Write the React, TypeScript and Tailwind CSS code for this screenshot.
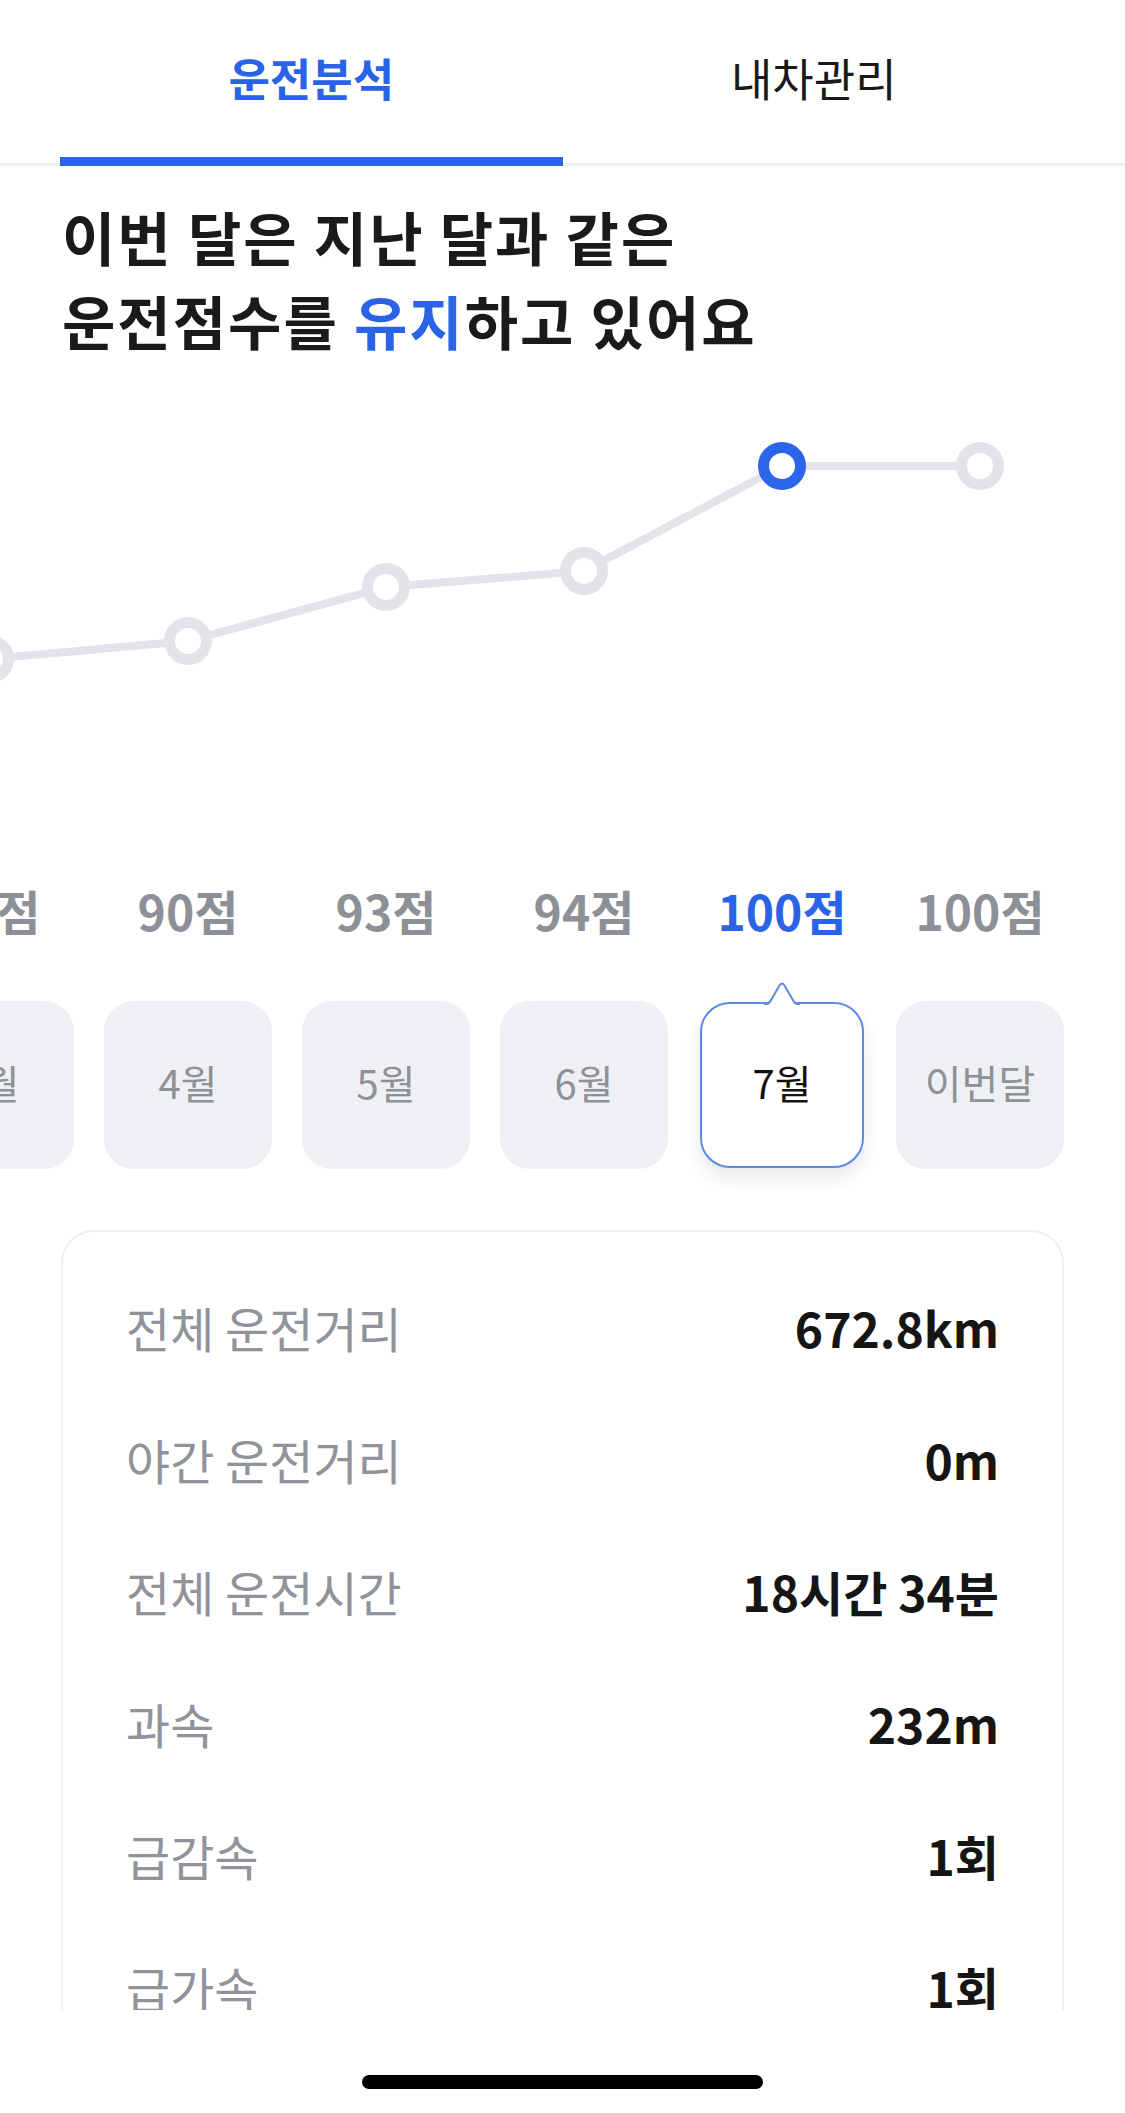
import React from "react";

const FONT = { fontFamily: '"Noto Sans CJK KR", "Noto Sans", sans-serif' };

const cols = [
  { score: "89점", month: "3월", y: 660 },
  { score: "90점", month: "4월", y: 642 },
  { score: "93점", month: "5월", y: 588 },
  { score: "94점", month: "6월", y: 572 },
  { score: "100점", month: "7월", y: 467, selected: true },
  { score: "100점", month: "이번달", y: 467 },
];

const CHART_TOP = 363;
const centers = [-10, 188, 386, 584, 782, 980];

function Chart() {
  const pts = cols.map((c, i) => [centers[i], c.y - CHART_TOP]);
  const d = pts.map((p, i) => `${i === 0 ? "M" : "L"}${p[0]} ${p[1]}`).join(" ");
  return (
    <svg width="1125" height="524" viewBox="0 0 1125 524" className="block">
      <path d={d} fill="none" stroke="#e3e4e9" strokeWidth="8" strokeLinejoin="round" />
      {pts.map((p, i) => (
        <circle
          key={i}
          cx={p[0]}
          cy={p[1]}
          r="18.5"
          fill="#ffffff"
          stroke={cols[i].selected ? "#2c64ea" : "#e3e4e9"}
          strokeWidth="11"
        />
      ))}
    </svg>
  );
}

const rows = [
  ["전체 운전거리", "672.8km"],
  ["야간 운전거리", "0m"],
  ["전체 운전시간", "18시간 34분"],
  ["과속", "232m"],
  ["급감속", "1회"],
  ["급가속", "1회"],
  ["급출발", "0회"],
];

const TAIL = "M0 22 L2 22 Q5 22 6.5 19 L15.5 3.5 Q18 -0.5 20.5 3.5 L29.5 19 Q31 22 34 22 L36 22";

export default function App() {
  return (
    <div className="relative w-[1125px] h-[2113px] bg-white overflow-hidden" style={FONT}>
      <div className="h-[2010px] overflow-hidden">
        {/* Tabs */}
        <div className="border-b-[3px] border-[#eeeff2]">
          <div className="flex px-[60px] h-[163px]">
            <div className="relative flex-1 flex justify-center pt-[55px]">
              <span className="text-[45px] leading-none font-bold text-[#2b63e6]">운전분석</span>
              <div className="absolute left-0 right-0 bottom-[-3px] h-[9px] bg-[#2b63eb]" />
            </div>
            <div className="flex-1 flex justify-center pt-[55px]">
              <span className="text-[45px] leading-none font-normal text-[#1a1a1a]">내차관리</span>
            </div>
          </div>
        </div>

        {/* Heading */}
        <div className="mt-[28px] px-[62px] text-[58px] leading-[84px] font-bold text-[#1a1a1a] tracking-[2px]">
          <div>이번 달은 지난 달과 같은</div>
          <div>
            운전점수를 <span className="text-[#2b63e6]">유지</span>하고 있어요
          </div>
        </div>

        {/* Chart */}
        <Chart />

        {/* Score labels */}
        <div className="flex ml-[-109px]">
          {cols.map((c, i) => (
            <div
              key={i}
              className={`w-[198px] shrink-0 flex justify-center text-[48px] leading-[48px] ${
                c.selected ? "text-[#2b63e6] font-bold" : "text-[#8d9096] font-semibold"
              }`}
            >
              {c.score}
            </div>
          ))}
        </div>

        {/* Month pills */}
        <div className="flex ml-[-109px] mt-[67px] h-[168px]">
          {cols.map((c, i) => (
            <div key={i} className="w-[198px] shrink-0 flex justify-center items-center">
              {c.selected ? (
                <div className="relative w-[164px] h-[166px] rounded-[30px] border-2 border-[#5b8be3] bg-white shadow-[0_10px_18px_rgba(0,0,0,0.09)] flex items-center justify-center pb-[6px]">
                  <svg
                    width="36"
                    height="24"
                    viewBox="0 0 36 24"
                    className="absolute left-1/2 -translate-x-1/2 top-[-22px]"
                  >
                    <path d={`${TAIL} L36 24 L0 24 Z`} fill="#ffffff" />
                    <path d={TAIL} fill="none" stroke="#5b8be3" strokeWidth="2" strokeLinejoin="round" />
                  </svg>
                  <span className="text-[40px] leading-none text-[#111111]">{c.month}</span>
                </div>
              ) : (
                <div className="w-[168px] h-[168px] rounded-[30px] bg-[#eff0f4] flex items-center justify-center pb-[6px]">
                  <span className="text-[40px] leading-none text-[#8e9196]">{c.month}</span>
                </div>
              )}
            </div>
          ))}
        </div>

        {/* Stats card */}
        <div className="mt-[61px] mx-[61px] border-2 border-[#efefef] rounded-[33px] pt-[29px] pb-[40px] px-[63px]">
          {rows.map(([label, value], i) => (
            <div key={i} className="h-[132px] flex items-center justify-between">
              <span className="text-[48px] text-[#909399]">{label}</span>
              <span className="text-[48px] font-bold text-[#151515]">{value}</span>
            </div>
          ))}
        </div>
      </div>

      {/* Home indicator */}
      <div className="flex justify-center mt-[65px]">
        <div className="w-[401px] h-[14px] rounded-full bg-black" />
      </div>
    </div>
  );
}
